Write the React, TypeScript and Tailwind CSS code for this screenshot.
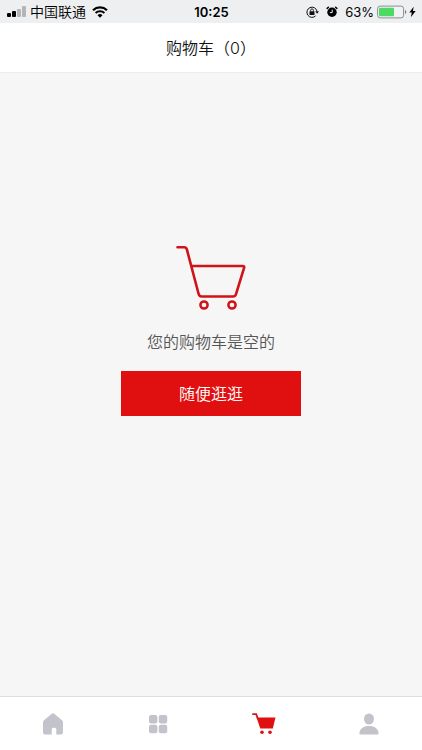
import React from 'react';

function SignalIcon() {
  return (
    <svg width="20" height="12" viewBox="0 0 20 12" aria-hidden="true">
      <rect x="0" y="7" width="4" height="4" rx="1" fill="#000" />
      <rect x="5" y="5" width="4" height="6" rx="1" fill="#000" />
      <rect x="10" y="3" width="4" height="8" rx="1" fill="#b4b5b8" />
      <rect x="15" y="0" width="4" height="11" rx="1" fill="#b4b5b8" />
    </svg>
  );
}

function WifiIcon() {
  return (
    <svg width="16" height="12" viewBox="0 0 16 12" aria-hidden="true">
      <path d="M1 4.2a10.2 10.2 0 0 1 14 0" fill="none" stroke="#000" strokeWidth="2.2" />
      <path d="M3.6 7a6.4 6.4 0 0 1 8.8 0" fill="none" stroke="#000" strokeWidth="2" />
      <path d="M5.5 9.2a3.7 3.7 0 0 1 5 0L8 11.8z" fill="#000" />
    </svg>
  );
}

function RotationLockIcon() {
  return (
    <svg width="13" height="12" viewBox="0 0 13 12" aria-hidden="true">
      <path d="M9.6 9.9A5.1 5.1 0 1 1 11 5.2" fill="none" stroke="#111" strokeWidth="1" />
      <path d="M9.2 5.2h3.8l-1.9 2.5z" fill="#111" />
      <rect x="3.5" y="5.3" width="5" height="3.6" rx=".5" fill="#111" />
      <path d="M4.6 5.5V4.3a1.4 1.4 0 0 1 2.8 0v1.2" fill="none" stroke="#111" strokeWidth=".9" />
    </svg>
  );
}

function AlarmIcon() {
  return (
    <svg width="12" height="12" viewBox="0 0 12 12" aria-hidden="true">
      <circle cx="6" cy="6.2" r="4.7" fill="#000" />
      <path d="M1.2 2.4 2.4 1.3M10.8 2.4 9.6 1.3" stroke="#000" strokeWidth="1.5" strokeLinecap="round" />
      <path d="M6.2 3.6v3H3.9" fill="none" stroke="#eeeff1" strokeWidth="1" />
    </svg>
  );
}

function BatteryIcon() {
  return (
    <svg width="30" height="14" viewBox="0 0 30 14" aria-hidden="true">
      <rect x=".6" y="1.1" width="26" height="11.8" rx="2.6" fill="#f1f2f3" stroke="#8c8d90" strokeWidth="1" />
      <path d="M28 5v4a2.2 2.2 0 0 0 0-4z" fill="#77787b" />
      <rect x="2" y="2.7" width="15" height="8.6" rx="1" fill="#4cd964" />
    </svg>
  );
}

function BoltIcon() {
  return (
    <svg width="7" height="12" viewBox="0 0 7 12" aria-hidden="true">
      <path d="M4.6.8.3 6.6h2.5l-1 4.7 4.9-6.2H4z" fill="#000" />
    </svg>
  );
}

function EmptyCartIcon() {
  return (
    <svg width="70" height="66" viewBox="0 0 70 66" fill="none" stroke="#d01316" aria-hidden="true">
      <path
        d="M1.5 2.2h6.7q2 0 2.6 2L22.5 48.500q.7 3 3 3H57q2.200 0 3-2.400l8-26q.8-2.100-1.500-2.100h-51"
        strokeWidth="2.6"
        strokeLinecap="round"
        strokeLinejoin="round"
      />
      <circle cx="28" cy="60" r="3.6" strokeWidth="2.5" />
      <circle cx="56" cy="60" r="3.6" strokeWidth="2.5" />
    </svg>
  );
}

function HomeIcon() {
  return (
    <svg width="22" height="22" viewBox="0 0 22 22" aria-hidden="true">
      <path
        d="M9.8.8q1.2-.9 2.4 0l7.8 6.4q1 .8 1 2v10.3q0 2-2 2h-4.7v-5.2a1.500 1.500 0 0 0-1.500-1.500h-1.600a1.500 1.500 0 0 0-1.500 1.500v5.200H3q-2 0-2-2V9.200q0-1.200 1-2z"
        fill="#c3c3cb"
      />
    </svg>
  );
}

function GridIcon() {
  return (
    <svg width="20" height="20" viewBox="0 0 20 20" fill="#c3c3cb" aria-hidden="true">
      <rect x="1" y="1" width="8.4" height="8.4" rx="2" />
      <rect x="10.8" y="1" width="8.4" height="8.4" rx="2" />
      <rect x="1" y="10.8" width="8.4" height="8.4" rx="2" />
      <rect x="10.8" y="10.8" width="8.4" height="8.4" rx="2" />
    </svg>
  );
}

function CartIcon() {
  return (
    <svg width="24" height="22" viewBox="0 0 24 22" fill="#e01010" aria-hidden="true">
      <path d="M1 1.2h3.2l1.5 4.2" fill="none" stroke="#c91c1c" strokeWidth="1.8" strokeLinecap="round" />
      <path d="M4.5 4.500h19L20.800 15.500H8.300z" />
      <circle cx="10" cy="19.3" r="1.8" />
      <circle cx="18" cy="19.3" r="1.8" />
    </svg>
  );
}

function UserIcon() {
  return (
    <svg width="20" height="22" viewBox="0 0 20 22" fill="#c3c3cb" aria-hidden="true">
      <ellipse cx="10" cy="6" rx="5" ry="5.6" />
      <path d="M.4 20.2C.6 15.6 4.5 12.9 10 12.9s9.4 2.7 9.6 7.3q0 1.4-1.4 1.4H1.8Q.4 21.6.4 20.2z" />
    </svg>
  );
}

const tabs = [
  { label: '首页', icon: <HomeIcon /> },
  { label: '分类', icon: <GridIcon /> },
  { label: '购物车', icon: <CartIcon /> },
  { label: '我的', icon: <UserIcon /> },
];

export default function App() {
  return (
    <div className="flex min-h-screen flex-col bg-[#f6f6f6] font-[Inter,'Noto_Sans_CJK_SC',sans-serif]">
      <div className="grid h-[23px] grid-cols-[1fr_auto_1fr] items-center bg-[#eeeff1] pr-1.5 pl-[7px] text-black">
        <div className="flex items-center">
          <SignalIcon />
          <span className="ml-[3px] text-sm leading-5 font-[350]">中国联通</span>
          <span className="ml-1.5">
            <WifiIcon />
          </span>
        </div>
        <span className="text-[13px] leading-5 font-semibold">10:25</span>
        <div className="flex items-center justify-end">
          <RotationLockIcon />
          <span className="ml-[7px]">
            <AlarmIcon />
          </span>
          <span className="ml-[7px] text-[13px] leading-5">63%</span>
          <span className="ml-[3px]">
            <BatteryIcon />
          </span>
          <span className="ml-0.5">
            <BoltIcon />
          </span>
        </div>
      </div>

      <header className="flex h-[50px] items-center justify-center border-b border-[#ececec] bg-white">
        <h1 className="text-base leading-6 font-[350] text-[#111]">购物车（0）</h1>
      </header>

      <main className="flex flex-1 flex-col items-center pt-[172px]">
        <EmptyCartIcon />
        <p className="mt-[19px] text-base leading-6 font-[350] text-[#555]">您的购物车是空的</p>
        <button type="button" className="mt-[17px] h-[45px] w-[180px] bg-[#e01010] text-base leading-6 font-[350] text-white">
          随便逛逛
        </button>
      </main>

      <nav className="grid h-[54px] grid-cols-4 border-t border-[#dedede] bg-white">
        {tabs.map((tab) => (
          <a key={tab.label} href="#" aria-label={tab.label} className="flex items-center justify-center">
            {tab.icon}
          </a>
        ))}
      </nav>
    </div>
  );
}
